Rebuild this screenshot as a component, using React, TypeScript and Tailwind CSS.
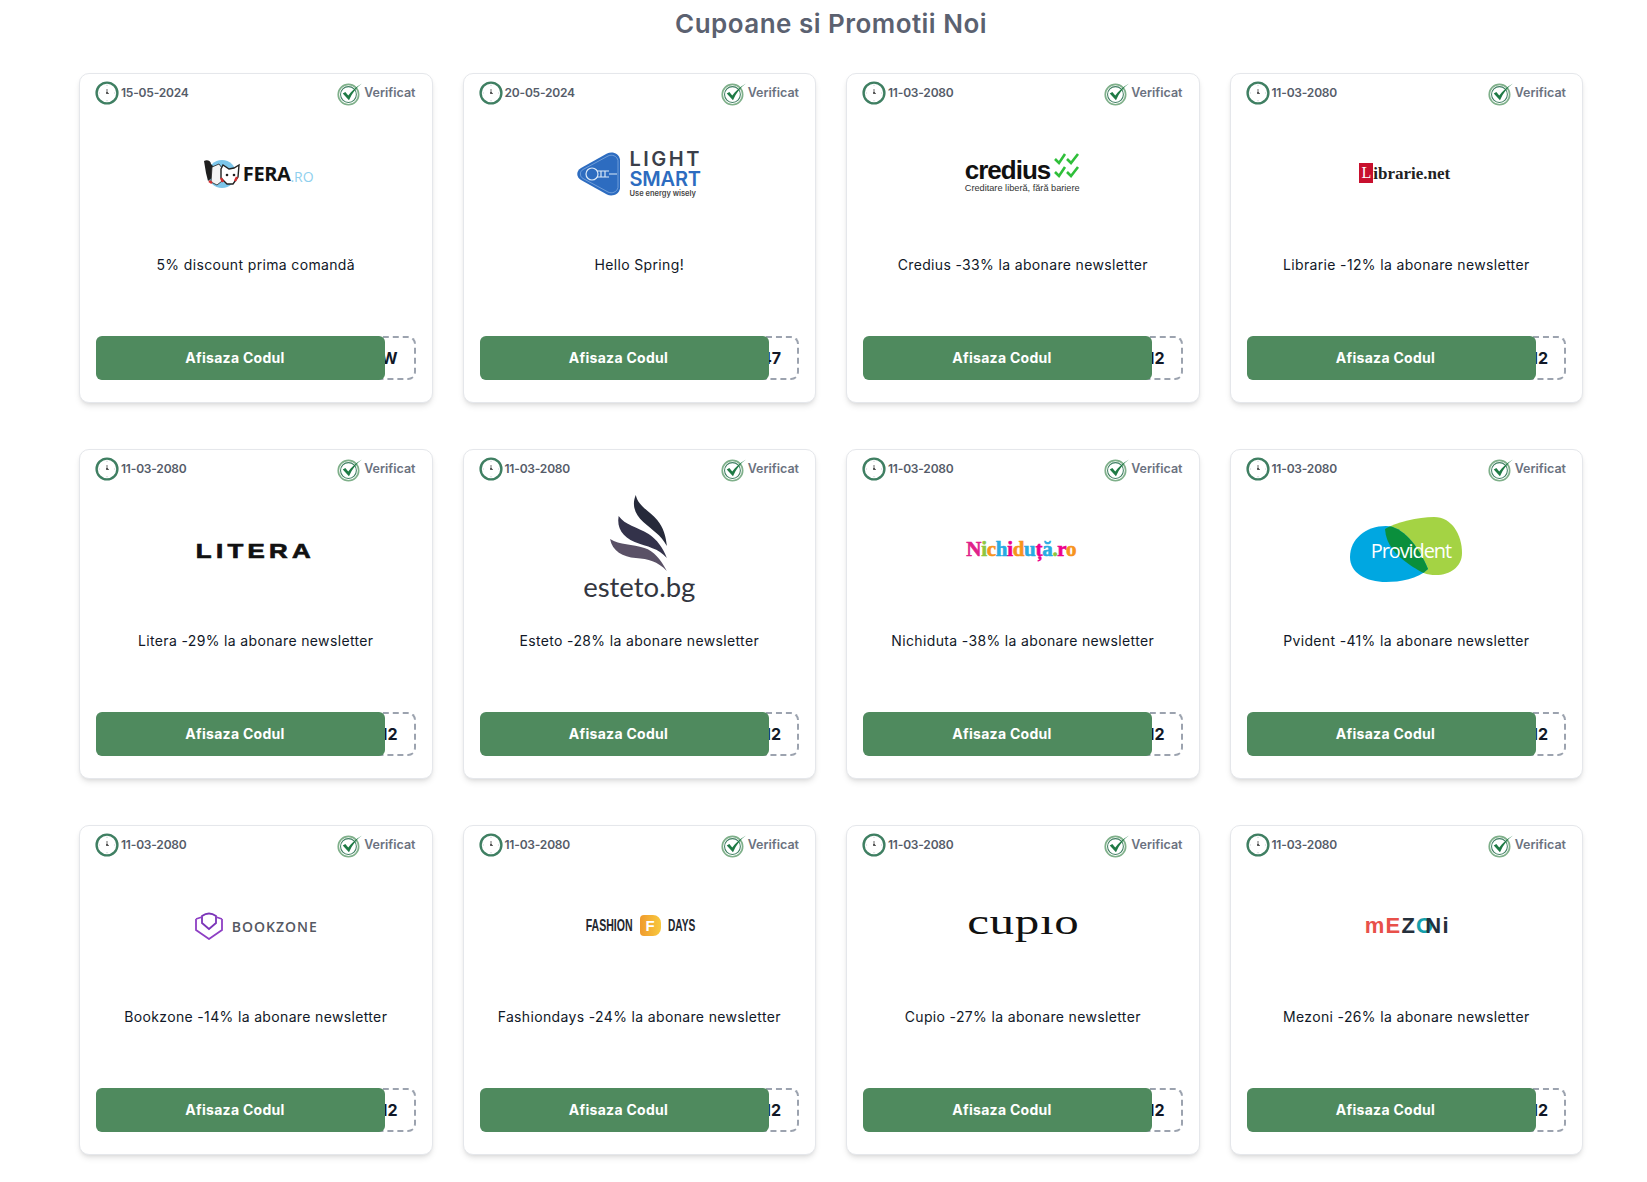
import React from "react";

const ClockIcon = () => (
  <svg width="24" height="24" viewBox="0 0 24 24" className="shrink-0 -ml-[1px]">
    <circle cx="12" cy="12" r="10.4" fill="#fff" stroke="#3f7f62" strokeWidth="2.4" />
    <circle cx="12" cy="12" r="1" fill="#333" />
    <path d="M12 12V8M12 12l2 .6" stroke="#444" strokeWidth="0.8" fill="none" />
    <path d="M12 3.800v1M12 19.200v1M3.800 12h1M19.200 12h1" stroke="#9ca3af" strokeWidth="0.7" />
  </svg>
);

const VerifiedIcon = () => (
  <svg width="25" height="25" viewBox="0 0 24 24" className="shrink-0">
    <circle cx="11" cy="13" r="9.800" fill="#fff" stroke="#7fb08a" strokeWidth="1.600" />
    <circle cx="11" cy="13" r="7.600" fill="#fff" stroke="#3f7f62" strokeWidth="1" />
    <path d="M5.500 12l2.500-1.500 2.800 3.500C14 10 18 6 24 2.500c-5 3.500-9.500 9-12.500 16z" fill="#1f7a45" />
  </svg>
);

const FeraLogo = () => (
  <div className="flex items-center ml-[5px] mt-[2px]">
    <svg width="38" height="30" viewBox="0 0 38 30">
      <circle cx="19" cy="15" r="14" fill="#7cc6ea" />
      <path d="M1 2c3-2 7 0 7 3l3 3-1 10-5 4-2-8z" fill="#1f1f1f" />
      <path d="M9 8l7-3 3 4v13l-5 4-6-3z" fill="#f4f4f4" stroke="#222" strokeWidth="0.8" />
      <path d="M18 10l2-4 6 4 5-1 5-3-1 12-5 7h-6l-6-6z" fill="#fff" stroke="#222" strokeWidth="1.400" />
      <circle cx="24" cy="16" r="1.300" fill="#222" />
      <circle cx="31" cy="16" r="1.300" fill="#222" />
      <path d="M6 22l3 2M18 19l2 4M34 18l-2 4" stroke="#d32f2f" strokeWidth="2.400" />
    </svg>
    <span className="font-['Open_Sans',sans-serif] text-[20px] font-bold text-[#141414] tracking-[-0.4px] leading-none ml-[2px]">FERA</span>
    <span className="font-['Open_Sans',sans-serif] text-[14px] text-[#8fd0ee] leading-none mt-[6px]">.RO</span>
  </div>
);

const LightSmartLogo = () => (
  <div className="flex items-center gap-[8px] mt-[1px]">
    <svg width="45" height="46" viewBox="0 0 45 46">
      <path d="M4 17L30 2.500c5-2.500 12-.5 13 6v29c-1 6-8 8.500-13 6L4 29c-5-3-5-9 0-12z" fill="#2d6cc0" />
      <path d="M6 18.500L31 5c4-2 9 0 10 4.500v27c-1 4.500-6 6.500-10 4.500L6 27.500c-3.500-2-3.500-7 0-9z" fill="none" stroke="#9cc0ea" strokeWidth="0.6" />
      <circle cx="15" cy="23" r="6" fill="none" stroke="#dbe9f8" strokeWidth="1.200" />
      <path d="M20 20h12M20 26h12M24 20v6M28 20v6M32 23h8" stroke="#dbe9f8" strokeWidth="1.200" />
    </svg>
    <div className="flex flex-col font-['Inter',sans-serif]">
      <span className="text-[20px] font-semibold text-[#3b3f4a] tracking-[2.500px] leading-[20px]">LIGHT</span>
      <span className="text-[20px] font-semibold text-[#2d6cc0] tracking-[-0.2px] leading-[20px]">SMART</span>
      <span className="text-[7.500px] font-semibold text-[#444] leading-[9px] whitespace-nowrap">Use energy wisely</span>
    </div>
  </div>
);

const CrediusLogo = () => (
  <div className="flex flex-col items-start w-[116px]">
    <div className="flex items-start h-[25px]">
      <span className="font-['Liberation_Sans',sans-serif] text-[26px] font-bold text-[#111] tracking-[-1px] leading-[25px] mt-[6px]">credius</span>
      <svg width="26" height="28" viewBox="0 0 26 28" className="ml-[4px] mt-[1px] shrink-0">
        <path d="M1 6l4 4 6-9M13 6l4 4 7-9M1 19l4 4 6-9M13 19l4 4 7-9" fill="none" stroke="#2fbf3a" strokeWidth="2.600" />
      </svg>
    </div>
    <span className="font-['Liberation_Sans',sans-serif] text-[9.200px] text-[#333] leading-[12px] mt-[5px] whitespace-nowrap">Creditare liberă, fără bariere</span>
  </div>
);

const LibrarieLogo = () => (
  <div className="flex items-center -ml-[3px]">
    <span className="w-[14px] h-[20px] bg-[#c8102e] text-white font-['Liberation_Serif',serif] text-[16px] leading-[20px] text-center">L</span>
    <span className="font-['Liberation_Serif',serif] text-[17px] font-bold text-[#222] leading-none">ibrarie.net</span>
  </div>
);

const LiteraLogo = () => (
  <span className="font-['Liberation_Sans',sans-serif] text-[21px] font-bold text-[#111] tracking-[3.500px] leading-none mt-[2px] [-webkit-text-stroke:0.7px_#111] scale-x-[1.23]">LITERA</span>
);

const EstetoLogo = () => (
  <div className="flex flex-col items-center">
    <svg width="60" height="76" viewBox="0 0 56 76" preserveAspectRatio="none">
      <path d="M25 0c2 11 12 15 20 25 6 8 8 16 9 26-6-12-13-15-22-24C24 19 21 10 25 0z" fill="#262a3a" />
      <path d="M9 21c6 9 17 11 28 18 8 6 13 13 17 24C46 53 36 52 24 47 13 42 7 33 9 21z" fill="#33324a" />
      <path d="M1 44c9 6 21 5 32 9 9 3 15 11 21 23-9-10-17-12-29-13C13 62 3 56 1 44z" fill="#5a5166" />
    </svg>
    <span className="font-['Lato',sans-serif] text-[27.500px] font-normal text-[#33363f] leading-[32px]">esteto.bg</span>
  </div>
);

const nichidutaLetters: [string, string][] = [
  ["N", "#e0218a"], ["i", "#8ec63f"], ["c", "#f7941d"], ["h", "#29abe2"], ["i", "#ec008c"],
  ["d", "#f7941d"], ["u", "#29abe2"], ["ț", "#ec008c"], ["ă", "#29abe2"], [".", "#8ec63f"], ["r", "#ec008c"], ["o", "#f7941d"],
];

const NichidutaLogo = () => (
  <div className="font-['Liberation_Serif',serif] text-[21px] font-bold leading-none tracking-[-0.3px] [-webkit-text-stroke:0.6px] -ml-[3px] mt-[1px]">
    {nichidutaLetters.map(([ch, color], i) => (
      <span key={i} style={{ color }}>{ch}</span>
    ))}
  </div>
);

const ProvidentLogo = () => (
  <div className="relative w-[113px] h-[66px] mt-[2px]">
    <svg width="113" height="66" viewBox="0 0 113 66" className="block">
      <defs>
        <clipPath id="provident-blue">
          <path d="M0 40C0 22 16 9 36 9 52 9 68 28 78 52 68 62 50 65 36 65 16 65 0 56 0 40z" />
        </clipPath>
      </defs>
      <path d="M35 12C46 5 68 0 84 0c18 0 28 18 28 36 0 14-12 22-26 22-10 0-14-2-26-10C46 38 36 28 35 12z" fill="#a4d344" />
      <path d="M0 40C0 22 16 9 36 9 52 9 68 28 78 52 68 62 50 65 36 65 16 65 0 56 0 40z" fill="#00a7e1" />
      <path d="M35 12C46 5 68 0 84 0c18 0 28 18 28 36 0 14-12 22-26 22-10 0-14-2-26-10C46 38 36 28 35 12z" fill="#0a8f3c" clipPath="url(#provident-blue)" />
    </svg>
    <span className="absolute left-[21px] top-[24px] font-['Open_Sans',sans-serif] text-[20px] text-white tracking-[-1.100px] leading-none">Provident</span>
  </div>
);

const BookzoneLogo = () => (
  <div className="flex items-center gap-[8px] mt-[1px]">
    <svg width="30" height="28" viewBox="0 0 30 28" fill="none" stroke="#7b35b8" strokeWidth="1.800">
      <path d="M8 4Q15-1 22 4v7l-7 6-7-6z" />
      <path d="M2 7l6-2M28 7l-6-2M2 7v11l13 9 13-9V7" stroke="#8e3fc4" />
    </svg>
    <span className="font-['Open_Sans',sans-serif] text-[14px] font-semibold text-[#555862] tracking-[1px] leading-none mt-[2px]">BOOKZONE</span>
  </div>
);

const FashionDaysLogo = () => (
  <div className="flex items-center gap-[7px] font-['Liberation_Sans',sans-serif] text-[17px] font-bold text-[#23262e] leading-none mt-[1px]">
    <span className="inline-block scale-x-[0.62] origin-right -ml-[24px]">FASHION</span>
    <span className="w-[21px] h-[21px] rounded-[4px] rounded-r-[8px] bg-linear-to-r from-[#ef9a2d] to-[#f8c93e] text-white text-[15px] text-center leading-[21px]">F</span>
    <span className="inline-block scale-x-[0.6] origin-left -mr-[16px]">DAYS</span>
  </div>
);

const CupioLogo = () => (
  <span className="font-['Liberation_Serif',serif] text-[36px] text-[#111] tracking-[0.5px] leading-none -mt-[6px] scale-x-[1.36]">cupıo</span>
);

const MezoniLogo = () => (
  <div className="flex items-center font-['Liberation_Sans',sans-serif] text-[22px] font-bold leading-none tracking-[1.200px] ml-[2px] mt-[2px]">
    <span className="text-[#e8504a]">mE</span>
    <span className="text-[#25303c]">Z</span>
    <span className="text-[#14a0ad]">O</span>
    <span className="text-[#25303c] -ml-[9px]">Ni</span>
  </div>
);

type Coupon = { date: string; logo: React.ReactNode; title: string; code: string };

const coupons: Coupon[] = [
  { date: "15-05-2024", logo: <FeraLogo />, title: "5% discount prima comandă", code: "NEW" },
  { date: "20-05-2024", logo: <LightSmartLogo />, title: "Hello Spring!", code: "SP47" },
  { date: "11-03-2080", logo: <CrediusLogo />, title: "Credius -33% la abonare newsletter", code: "12" },
  { date: "11-03-2080", logo: <LibrarieLogo />, title: "Librarie -12% la abonare newsletter", code: "12" },
  { date: "11-03-2080", logo: <LiteraLogo />, title: "Litera -29% la abonare newsletter", code: "12" },
  { date: "11-03-2080", logo: <EstetoLogo />, title: "Esteto -28% la abonare newsletter", code: "12" },
  { date: "11-03-2080", logo: <NichidutaLogo />, title: "Nichiduta -38% la abonare newsletter", code: "12" },
  { date: "11-03-2080", logo: <ProvidentLogo />, title: "Pvident -41% la abonare newsletter", code: "12" },
  { date: "11-03-2080", logo: <BookzoneLogo />, title: "Bookzone -14% la abonare newsletter", code: "12" },
  { date: "11-03-2080", logo: <FashionDaysLogo />, title: "Fashiondays -24% la abonare newsletter", code: "12" },
  { date: "11-03-2080", logo: <CupioLogo />, title: "Cupio -27% la abonare newsletter", code: "12" },
  { date: "11-03-2080", logo: <MezoniLogo />, title: "Mezoni -26% la abonare newsletter", code: "12" },
];

const CouponCard = ({ coupon }: { coupon: Coupon }) => (
  <div className="h-[330px] bg-white border border-[#e5e7eb] rounded-[10px] shadow-md flex flex-col px-[16px] pt-[7px]">
    {/* date + verified */}
    <div className="flex justify-between items-center h-[24px]">
      <div className="flex items-center gap-[2px] text-[12px] font-semibold text-[#555c69] tracking-[-0.2px]">
        <ClockIcon />
        {coupon.date}
      </div>
      <div className="flex items-center gap-[2px] text-[12.500px] font-semibold text-[#6b7280]">
        <VerifiedIcon />
        Verificat
      </div>
    </div>

    {/* logo */}
    <div className="h-[120px] mt-[8px] flex items-center justify-center">{coupon.logo}</div>

    {/* title */}
    <div className="h-[20px] mt-[22px] text-center text-[14px] leading-[20px] font-normal text-[#111827] tracking-[0.35px] whitespace-nowrap">
      {coupon.title}
    </div>

    {/* button with the code peeking out */}
    <div className="relative mt-[61px] h-[44px] rounded-[8px] border-2 border-dashed border-[#9ca3af] flex items-center justify-end pr-[16px]">
      <span className="text-[16px] font-bold text-[#111827]">{coupon.code}</span>
      <button className="absolute -left-[2px] -top-[2px] -bottom-[2px] w-[289px] rounded-[6px] bg-[#4f8a5e] text-white text-[14px] font-bold tracking-[0.3px] pr-[11px] pb-[1px]">
        Afisaza Codul
      </button>
    </div>
  </div>
);

export default function App() {
  return (
    <div className="min-h-screen bg-white font-['Inter',sans-serif] pl-[79px] pr-[64px]">
      <h2 className="pt-[7px] h-[73px] text-center text-[26px] leading-[34px] font-semibold text-[#5b6170] tracking-[0.47px]">
        Cupoane si Promotii Noi
      </h2>
      <div className="grid grid-cols-4 gap-x-[30px] gap-y-[46px] pb-[28px]">
        {coupons.map((coupon, i) => (
          <CouponCard key={i} coupon={coupon} />
        ))}
      </div>
    </div>
  );
}
